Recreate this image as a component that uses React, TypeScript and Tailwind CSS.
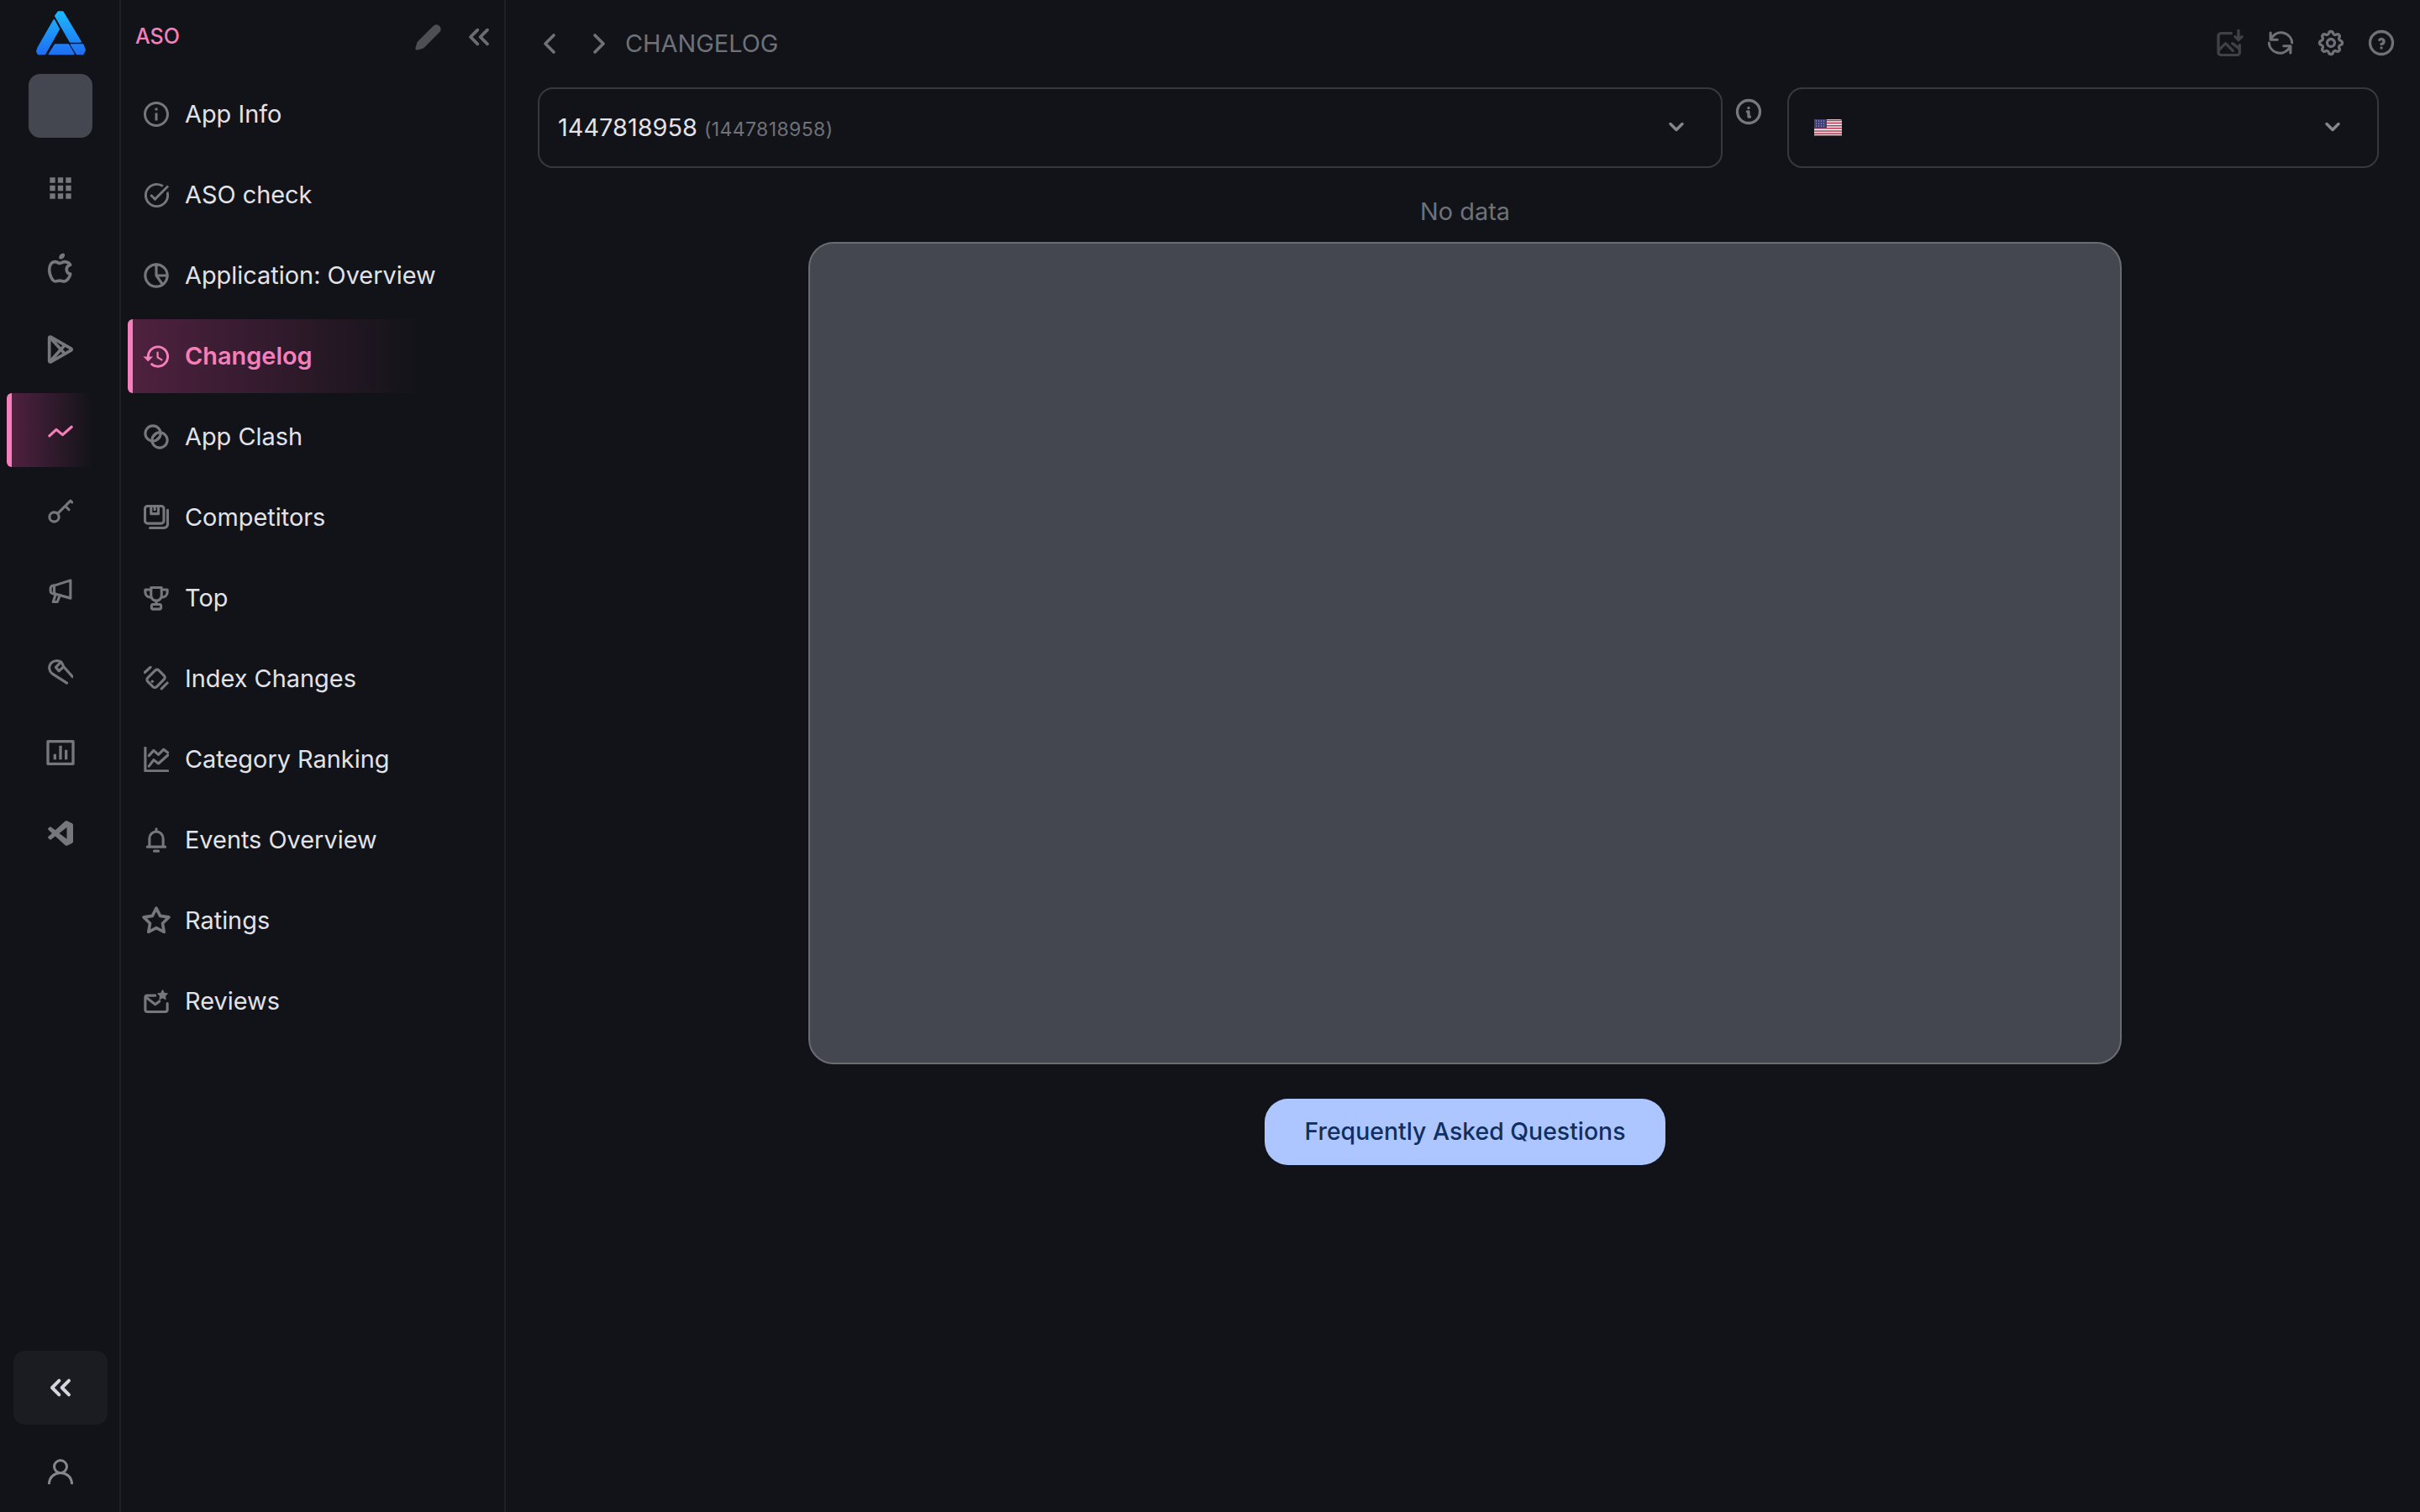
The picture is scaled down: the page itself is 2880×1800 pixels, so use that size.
import { ReactNode } from 'react'
import { ChevronDown, ChevronLeft, ChevronRight, ChevronsLeft, Pencil } from 'lucide-react'
import { MdApps, MdHistory, MdOutlineInfo, MdOutlineTaskAlt } from 'react-icons/md'
import { TbBrandApple, TbBrandGooglePlay, TbHelpCircle, TbInfoCircle, TbSettings, TbStar } from 'react-icons/tb'
import { RiBarChartBoxLine } from 'react-icons/ri'
import { BiLogoVisualStudio } from 'react-icons/bi'

const Stroke = ({ children, className = 'h-[30px] w-[30px]' }: { children: ReactNode; className?: string }) => (
  <svg
    viewBox="0 0 24 24"
    fill="none"
    stroke="currentColor"
    strokeWidth={2.5}
    strokeLinecap="round"
    strokeLinejoin="round"
    className={`shrink-0 ${className}`}
  >
    {children}
  </svg>
)

const PieIcon = () => (
  <Stroke>
    <circle cx="12" cy="12" r="10.5" />
    <path d="M12 1.5V12h10.5M12 12l6 8.5" />
  </Stroke>
)

const ClashIcon = () => (
  <Stroke>
    <circle cx="8.8" cy="8.8" r="7.3" />
    <circle cx="15.2" cy="15.2" r="7.3" />
    <path d="M8.5 12.5l4-4M11.5 15.5l4-4" strokeWidth={2} />
  </Stroke>
)

const CompetitorsIcon = () => (
  <Stroke>
    <rect x="1.2" y="1.2" width="18" height="16.5" rx="2.5" />
    <path d="M7 1.5v7h7v-7M10.5 1.5v3" />
    <path d="M22.8 5v13.5a3.5 3.5 0 0 1-3.5 3.5H6" />
  </Stroke>
)

const TrophyIcon = () => (
  <Stroke>
    <path d="M7 2h10v7.5a5 5 0 0 1-10 0z" />
    <path d="M7 4H1.5v2.5A4.5 4.5 0 0 0 7 11M17 4h5.5v2.5A4.5 4.5 0 0 1 17 11" />
    <path d="M12 14.5V18" />
    <rect x="7.5" y="18" width="9" height="4.5" rx="1.5" />
  </Stroke>
)

const RotateIcon = () => (
  <Stroke>
    <rect x="6" y="4.5" width="12" height="15" rx="2.5" transform="rotate(45 12 11.5)" />
    <path d="M1 6 6.5 1M17 21.5 22.5 16" />
    <path d="M8.2 14.5h.01" strokeWidth={2.8} />
  </Stroke>
)

const RankingIcon = () => (
  <Stroke>
    <path d="M1.5 1v22H23" />
    <path d="M5 8.5 9.5 3.5l4.5 4 5-5 4 3M5 18.5 9.5 12.5l4.5 3.5 9-8" />
  </Stroke>
)

const BellIcon = () => (
  <Stroke>
    <path d="M12 1.5v1.5M5.5 18v-7.5a6.5 6.5 0 0 1 13 0V18" />
    <path d="M3.5 18.5h17M10 22.5h4" />
  </Stroke>
)

const MailStarIcon = () => (
  <Stroke>
    <path d="M11 6.5H3.5a2 2 0 0 0-2 2V20a2 2 0 0 0 2 2h17a2 2 0 0 0 2-2v-6" />
    <path d="M2 8l9 7 4-3" />
    <path d="m18 1.5 1.4 2.8 3.1.4-2.2 2.2.5 3.1-2.8-1.4-2.8 1.4.5-3.1-2.2-2.2 3.1-.4z" fill="currentColor" strokeWidth={1} />
  </Stroke>
)

const ImageDownloadIcon = () => (
  <Stroke className="h-[32px] w-[32px]">
    <path d="M13 3.5H4a2.5 2.5 0 0 0-2.5 2.5v14.5A2.5 2.5 0 0 0 4 23h14a2.5 2.5 0 0 0 2.5-2.5V14" />
    <path d="m2 18.5 6-6 6.5 6.5M14 12.5l6 4.5" />
    <path d="M19.5 1v8M16.5 6.5l3 3 3-3" />
  </Stroke>
)

const RefreshIcon = () => (
  <Stroke>
    <path d="M23 12A10.5 10.5 0 0 0 4.5 6L2.5 8.5M2.5 2.5V9H9" />
    <path d="M1 12a10.5 10.5 0 0 0 18.5 6l2-2.5M21.5 21.5V15H15" />
  </Stroke>
)

const TrendIcon = () => (
  <Stroke>
    <path d="M1.5 17.5 8 11.5l6 5 8.5-7.5" strokeWidth={2.6} />
  </Stroke>
)

const KeyIcon = () => (
  <Stroke>
    <circle cx="6" cy="18" r="4.5" />
    <path d="M9.3 14.7 21.5 2.5l1.5 1.5M16.5 7.5l3.5 3.5" />
  </Stroke>
)

const MegaphoneIcon = () => (
  <Stroke>
    <path d="M21.5 1.5 6 6.5a2.8 2.8 0 0 0-3.5 2.7v2.3a2.8 2.8 0 0 0 3.5 2.7l15.5 4.3z" />
    <path d="M6 6.5v7.7M11.5 15.5l-2.5 6.5H5l2.5-7.5" />
  </Stroke>
)

const WrenchIcon = () => (
  <Stroke>
    <path d="M12.5 2.5C9.5.5 5 1 2.8 3.8.5 7 1 11 4 13.5L18 22.5" />
    <path d="M12.5 2.5 7.5 7.5l3 3.5 4.5-4c-.5-1-1-3-2.5-4.5zM15 7l8.5 9.5" />
  </Stroke>
)

const Logo = () => (
  <svg viewBox="0 0 177 159" className="h-[53px] w-[59px]">
    <defs>
      <linearGradient id="logo-fill" x1="0" y1="0" x2="0" y2="159" gradientUnits="userSpaceOnUse">
        <stop offset="0" stopColor="#1cb8ff" />
        <stop offset="1" stopColor="#1f6cf2" />
      </linearGradient>
    </defs>
    <g fill="url(#logo-fill)" stroke="url(#logo-fill)" strokeWidth={6} strokeLinejoin="round">
      <path d="M69 18 79 4h16l64 106h-37z" />
      <path d="M125 121h42l7 19-7 14h-21z" />
      <path d="M64 33 81 65 31 154H8l-5-9 4-13z" />
      <path d="M68 121h47l19 33H47z" />
    </g>
  </svg>
)

const UsFlag = () => (
  <svg viewBox="0 0 33 20" className="h-[20px] w-[33px] rounded-[2px]">
    <rect width="33" height="20" fill="#eef0f3" />
    <path
      d="M0 1.5h33M0 4.6h33M0 7.7h33M0 10.8h33M0 13.9h33M0 17h33M0 19.5h33"
      stroke="#b5394e"
      strokeWidth={1.5}
    />
    <rect width="15" height="10.5" fill="#3f3f78" />
    <path d="M2 2h12M2 5h12M2 8h12" stroke="#c9cbe0" strokeWidth={1} strokeDasharray="1 2" />
  </svg>
)

const railItems: { icon: ReactNode; active?: boolean }[] = [
  { icon: <MdApps className="h-[38px] w-[38px] shrink-0" /> },
  { icon: <TbBrandApple className="h-[40px] w-[40px] shrink-0" strokeWidth={2.2} /> },
  { icon: <TbBrandGooglePlay className="h-[40px] w-[40px] shrink-0" strokeWidth={2.2} /> },
  { icon: <TrendIcon />, active: true },
  { icon: <KeyIcon /> },
  { icon: <MegaphoneIcon /> },
  { icon: <WrenchIcon /> },
  { icon: <RiBarChartBoxLine className="h-[40px] w-[40px] shrink-0" /> },
  { icon: <BiLogoVisualStudio className="h-[36px] w-[36px] shrink-0" /> },
]

const navItems: { label: string; icon: ReactNode; active?: boolean }[] = [
  { label: 'App Info', icon: <MdOutlineInfo className="h-[36px] w-[36px] shrink-0" /> },
  { label: 'ASO check', icon: <MdOutlineTaskAlt className="h-[35px] w-[35px] shrink-0" /> },
  { label: 'Application: Overview', icon: <PieIcon /> },
  { label: 'Changelog', icon: <MdHistory className="h-[35px] w-[35px] shrink-0" />, active: true },
  { label: 'App Clash', icon: <ClashIcon /> },
  { label: 'Competitors', icon: <CompetitorsIcon /> },
  { label: 'Top', icon: <TrophyIcon /> },
  { label: 'Index Changes', icon: <RotateIcon /> },
  { label: 'Category Ranking', icon: <RankingIcon /> },
  { label: 'Events Overview', icon: <BellIcon /> },
  { label: 'Ratings', icon: <TbStar className="h-[36px] w-[36px] shrink-0" strokeWidth={2.4} /> },
  { label: 'Reviews', icon: <MailStarIcon /> },
]

const activeRow =
  'rounded-[6px] border-l-[6px] border-[#f57fba] bg-linear-to-r from-[#4f213f] to-transparent to-[80%] text-[#f57fba]'

export default function App() {
  return (
    <div className="flex h-[1800px] w-[2880px] overflow-hidden bg-[#111318] font-['Inter',sans-serif] text-[28.9px] text-[#e2e2e9]">
      {/* app rail */}
      <aside className="flex w-[144px] shrink-0 flex-col border-r-2 border-[#1e2026]">
        <div className="flex justify-center pl-[2px] pt-[13px]">
          <Logo />
        </div>
        <div className="ml-[34px] mt-[22px] h-[76px] w-[76px] rounded-[14px] bg-[#44474f]" />
        <div className="mt-[16px] flex flex-col gap-[8px] pl-[8px] pr-[6px]">
          {railItems.map((item, i) => (
            <div
              key={i}
              className={`flex h-[88px] items-center justify-center ${
                item.active ? `${activeRow} pr-[6px]` : 'text-[#75777d]'
              }`}
            >
              {item.icon}
            </div>
          ))}
        </div>
        <div className="mt-auto flex flex-col items-center pb-[33px] pl-[16px] pr-[14px]">
          <div className="flex h-[88px] w-full items-center justify-center rounded-[14px] bg-[#1b1c21] text-[#d4d5de]">
            <ChevronsLeft className="h-[40px] w-[40px]" strokeWidth={2.4} />
          </div>
          <svg viewBox="0 0 30 30" fill="none" stroke="#85878d" strokeWidth={3} strokeLinecap="round" className="mt-[41px] h-[30px] w-[30px]">
            <circle cx="15" cy="9" r="7.5" />
            <path d="M1.5 29C2 21 8 16.5 15 16.5S28 21 28.5 29" />
          </svg>
        </div>
      </aside>

      {/* section nav */}
      <nav className="flex w-[458px] shrink-0 flex-col border-r-2 border-[#1e2026]">
        <div className="flex h-[88px] items-center justify-between pl-[17px] pr-[10px]">
          <span className="text-[25px] font-medium text-[#f57fba]">ASO</span>
          <div className="flex items-center gap-[24px]">
            <Pencil className="h-[33px] w-[33px] text-[#4d4f55]" fill="currentColor" />
            <ChevronsLeft className="h-[40px] w-[40px] text-[#6a6c72]" strokeWidth={2.3} />
          </div>
        </div>
        <ul className="mt-[4px] flex flex-col gap-[8px] px-[8px]">
          {navItems.map((item) => (
            <li
              key={item.label}
              className={`flex h-[88px] items-center gap-[19px] pl-[13px] ${
                item.active ? `${activeRow} font-semibold` : 'border-l-[6px] border-transparent'
              }`}
            >
              <span className={`flex h-[30px] w-[30px] items-center justify-center ${item.active ? '' : 'text-[#75777d]'}`}>
                {item.icon}
              </span>
              {item.label}
            </li>
          ))}
        </ul>
      </nav>

      {/* main */}
      <main className="flex min-w-0 flex-1 flex-col pl-[38px] pr-[28px]">
        <header className="flex h-[104px] w-full items-center text-[#6f7178]">
          <div className="flex flex-1 items-center">
            <ChevronLeft className="ml-[-6px] h-[40px] w-[40px]" strokeWidth={2.2} />
            <ChevronRight className="ml-[19px] h-[40px] w-[40px]" strokeWidth={2.2} />
            <span className="ml-[11px]">CHANGELOG</span>
          </div>
          <div className="mb-[2px] flex items-center gap-[24px]">
            <span className="flex w-[36px] justify-center text-[#3f4147]">
              <ImageDownloadIcon />
            </span>
            <span className="flex w-[36px] justify-center">
              <RefreshIcon />
            </span>
            <TbSettings className="h-[36px] w-[36px]" strokeWidth={2.2} />
            <TbHelpCircle className="h-[36px] w-[36px]" strokeWidth={2.2} />
          </div>
        </header>

        <div className="flex w-full items-start pr-[21px]">
          <div className="flex h-[96px] w-[1410px] items-center justify-between rounded-[18px] border-2 border-[#36383f] pl-[22px] pr-[39px]">
            <span className="flex items-baseline gap-[8px]">
              1447818958
              <span className="text-[23px] tracking-[0.4px] text-[#6f7178]">(1447818958)</span>
            </span>
            <ChevronDown className="mb-[2px] h-[28px] w-[28px] text-[#85878d]" strokeWidth={3} />
          </div>
          <TbInfoCircle className="ml-[13px] mr-[28px] mt-[11px] h-[36px] w-[36px] shrink-0 text-[#76787e]" strokeWidth={2.2} />
          <div className="flex h-[96px] flex-1 items-center justify-between rounded-[18px] border-2 border-[#36383f] pl-[30px] pr-[39px]">
            <UsFlag />
            <ChevronDown className="mb-[2px] h-[28px] w-[28px] text-[#85878d]" strokeWidth={3} />
          </div>
        </div>

        <div className="flex flex-col items-center pr-[5px]">
          <p className="mt-[34px] leading-[35px] text-[#6f7178]">No data</p>
          <div className="mt-[19px] h-[979px] w-[1563px] rounded-[30px] border-2 border-[#6a6c72] bg-[#44474f]" />
          <button className="mt-[41px] h-[79px] w-[477px] rounded-[28px] bg-[#aec6ff] text-[28.4px] font-medium text-[#102f60]">
            Frequently Asked Questions
          </button>
        </div>
      </main>
    </div>
  )
}
